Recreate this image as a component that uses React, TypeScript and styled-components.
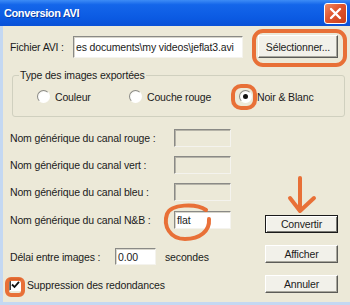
import React from "react";
import styled, { createGlobalStyle } from "styled-components";

const GlobalStyle = createGlobalStyle`
  html, body {
    margin: 0;
    padding: 0;
    background: #ffffff;
  }
`;

const Window = styled.div`
  position: relative;
  width: 350px;
  height: 305px;
  display: flex;
  flex-direction: column;
  overflow: hidden;
  font-family: "Liberation Sans", Arial, sans-serif;
  font-size: 10.5px;
  letter-spacing: -0.15px;
  color: #1b1b1b;
`;

const TitleBar = styled.div`
  height: 26px;
  flex: none;
  display: flex;
  align-items: center;
  justify-content: space-between;
  padding: 0 3px 0 4px;
  background: linear-gradient(#3d8cf6 0%, #1466ea 18%, #0b5ae2 70%, #0a51d6 100%);
`;

const Title = styled.span`
  color: #ffffff;
  font-weight: bold;
  font-size: 11px;
  letter-spacing: -0.4px;
  text-shadow: 1px 1px 0 #0a3ca8;
`;

const CloseButton = styled.div`
  width: 23px;
  height: 21px;
  box-sizing: border-box;
  border: 1px solid #ffffff;
  border-radius: 3px;
  background: linear-gradient(135deg, #f08a64 0%, #e0552e 45%, #c9401c 100%);
  display: flex;
  align-items: center;
  justify-content: center;
`;

const Body = styled.div`
  flex: 1;
  display: flex;
  flex-direction: column;
  background: #ece9d8;
  border-left: 3px solid #c4d8f2;
  border-bottom: 3px solid #c4d8f2;
  padding: 9px 5px 0 7px;
`;

const FileRow = styled.div`
  display: flex;
  align-items: center;
  height: 23px;
  padding-right: 7px;
`;

const Label = styled.span<{ $width: number }>`
  width: ${(p) => p.$width}px;
  flex: none;
  white-space: nowrap;
`;

const TextBox = styled.div<{ $width: number; $height: number; $disabled?: boolean }>`
  width: ${(p) => p.$width}px;
  height: ${(p) => p.$height}px;
  flex: none;
  box-sizing: border-box;
  display: flex;
  align-items: center;
  padding-left: 2px;
  overflow: hidden;
  white-space: nowrap;
  background: ${(p) => (p.$disabled ? "#ece9d8" : "#ffffff")};
  border: 1px solid;
  border-color: #8a8a86 #f4f3ee #f4f3ee #8a8a86;
  box-shadow: inset 1px 1px 0 ${(p) => (p.$disabled ? "#b5b3a8" : "#d8d6cc")};
`;

const Button = styled.div<{ $width: number; $height: number; $isDefault?: boolean }>`
  width: ${(p) => p.$width}px;
  height: ${(p) => p.$height}px;
  flex: none;
  box-sizing: border-box;
  display: flex;
  align-items: center;
  justify-content: center;
  background: #f2f1ea;
  border: 1px solid;
  border-color: ${(p) => (p.$isDefault ? "#1a1a1a" : "#ffffff #5c5c58 #5c5c58 #ffffff")};
  box-shadow: ${(p) =>
    p.$isDefault
      ? "inset 1px 1px 0 #ffffff, inset -1px -1px 0 #7a7a74"
      : "inset -1px -1px 0 #a7a69c"};
`;

const GroupBox = styled.fieldset`
  margin: 11px 0 0 2px;
  padding: 0 0 13px 0;
  border: 1px solid #d0d0bf;
  border-radius: 3px;
  min-width: 0;
`;

const Legend = styled.legend`
  margin-left: 6px;
  padding: 0 1px;
`;

const RadioRow = styled.div`
  display: grid;
  grid-template-columns: 92px 110px 1fr;
  align-items: center;
  padding: 9px 0 0 24px;
`;

const RadioOption = styled.label`
  display: flex;
  align-items: center;
  gap: 5px;
`;

const RadioDot = styled.span<{ $checked?: boolean }>`
  width: 13px;
  height: 13px;
  box-sizing: border-box;
  border-radius: 50%;
  border: 1px solid;
  border-color: #8a8a86 #ffffff #ffffff #8a8a86;
  background: radial-gradient(circle at 60% 60%, #ffffff 55%, #e6e4da 100%);
  display: flex;
  align-items: center;
  justify-content: center;

  &::after {
    content: "";
    width: 5px;
    height: 5px;
    border-radius: 50%;
    background: ${(p) => (p.$checked ? "#111111" : "transparent")};
  }
`;

const Lower = styled.div`
  display: flex;
  margin-top: 12px;
`;

const LeftCol = styled.div`
  display: flex;
  flex-direction: column;
`;

const FieldRow = styled.div<{ $top: number }>`
  display: flex;
  align-items: center;
  margin-top: ${(p) => p.$top}px;
`;

const Unit = styled.span`
  margin-left: 9px;
`;

const CheckRow = styled.label`
  display: flex;
  align-items: center;
  gap: 5px;
  margin-top: 13px;
  margin-left: -1px;
`;

const CheckBox = styled.span`
  width: 13px;
  height: 13px;
  box-sizing: border-box;
  background: #ffffff;
  border: 1px solid;
  border-color: #7a7a76 #ffffff #ffffff #7a7a76;
  box-shadow: inset 1px 1px 0 #404040;
  display: flex;
  align-items: center;
  justify-content: center;
`;

const RightCol = styled.div`
  margin-left: auto;
  margin-right: 7px;
  padding-top: 86px;
  display: flex;
  flex-direction: column;
  gap: 12px;
`;

const Marks = styled.svg`
  position: absolute;
  left: 0;
  top: 0;
  pointer-events: none;
`;

const channels = [
  { label: "Nom générique du canal rouge :", top: 0, value: "", disabled: true },
  { label: "Nom générique du canal vert :", top: 9, value: "", disabled: true },
  { label: "Nom générique du canal bleu :", top: 9, value: "", disabled: true },
  { label: "Nom générique du canal N&B :", top: 10, value: "flat", disabled: false },
];

const radios = [
  { label: "Couleur", checked: false },
  { label: "Couche rouge", checked: false },
  { label: "Noir & Blanc", checked: true },
];

export default function App() {
  return (
    <>
      <GlobalStyle />
      <Window>
        <TitleBar>
          <Title>Conversion AVI</Title>
          <CloseButton>
            <svg width="13" height="13" viewBox="0 0 13 13">
              <path d="M2 2 L11 11 M11 2 L2 11" stroke="#ffffff" strokeWidth="2.4" strokeLinecap="round" />
            </svg>
          </CloseButton>
        </TitleBar>
        <Body>
          <FileRow>
            <Label $width={63}>Fichier AVI :</Label>
            <TextBox $width={170} $height={22}>es documents\my videos\jeflat3.avi</TextBox>
            <Button $width={80} $height={23} style={{ marginLeft: "auto" }}>
              Sélectionner...
            </Button>
          </FileRow>

          <GroupBox>
            <Legend>Type des images exportées</Legend>
            <RadioRow>
              {radios.map((r) => (
                <RadioOption key={r.label}>
                  <RadioDot $checked={r.checked} />
                  {r.label}
                </RadioOption>
              ))}
            </RadioRow>
          </GroupBox>

          <Lower>
            <LeftCol>
              {channels.map((c) => (
                <FieldRow key={c.label} $top={c.top}>
                  <Label $width={164}>{c.label}</Label>
                  <TextBox $width={57} $height={18} $disabled={c.disabled}>
                    {c.value}
                  </TextBox>
                </FieldRow>
              ))}
              <FieldRow $top={19}>
                <Label $width={105}>Délai entre images :</Label>
                <TextBox $width={41} $height={17}>0.00</TextBox>
                <Unit>secondes</Unit>
              </FieldRow>
              <CheckRow>
                <CheckBox>
                  <svg width="9" height="9" viewBox="0 0 9 9">
                    <path d="M1 4.5 L3.5 7 L8 1.8" stroke="#111" strokeWidth="1.8" fill="none" />
                  </svg>
                </CheckBox>
                Suppression des redondances
              </CheckRow>
            </LeftCol>
            <RightCol>
              <Button $width={73} $height={18} $isDefault>
                Convertir
              </Button>
              <Button $width={73} $height={18}>
                Afficher
              </Button>
              <Button $width={73} $height={18}>
                Annuler
              </Button>
            </RightCol>
          </Lower>
        </Body>

        <Marks width="350" height="305" viewBox="0 0 350 305">
          <g stroke="#e8662a" strokeWidth="4" fill="none" strokeLinecap="round" strokeLinejoin="round" opacity="0.92">
            <rect x="254" y="31" width="91" height="34" rx="9" />
            <rect x="233" y="86" width="22" height="22" rx="8" />
            <path d="M206 210 C196 203, 171 204, 167 214 C163 226, 170 239, 185 239 C200 239, 210 231, 209 219" />
            <path d="M300 178 L300 210" />
            <path d="M290 198 L300 211 L314 198" />
            <rect x="7" y="279" width="16" height="16" rx="4" />
          </g>
        </Marks>
      </Window>
    </>
  );
}
